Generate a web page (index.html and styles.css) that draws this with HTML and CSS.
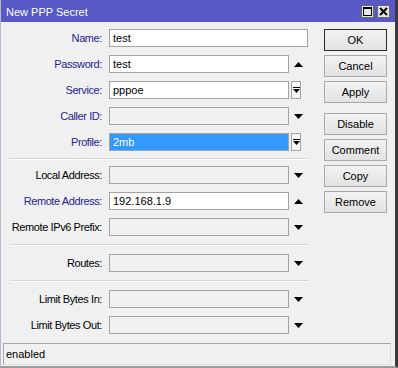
FILE: index.html
```html
<!DOCTYPE html>
<html lang="en">

<head>
	<meta charset="utf-8">
	<title>New PPP Secret</title>
	<link rel="stylesheet" href="styles.css">
</head>

<body>
	<div class="window">
		<header class="titlebar">
			<span class="title">New PPP Secret</span>
			<div class="title-btns">
				<span class="tbtn">
					<svg width="9" height="9" viewBox="0 0 9 9"><rect x="0.5" y="0.5" width="8" height="8" fill="none" stroke="#000" stroke-width="1"/><rect x="0" y="0" width="9" height="2" fill="#000"/></svg>
				</span>
				<span class="tbtn">
					<svg width="9" height="9" viewBox="0 0 9 9"><path d="M1 1 L8 8 M8 1 L1 8" stroke="#000" stroke-width="2"/></svg>
				</span>
			</div>
		</header>

		<main class="content">
			<section class="form">
				<div class="row">
					<label class="lbl blue">Name:</label>
					<div class="field wide">test</div>
				</div>
				<div class="row">
					<label class="lbl blue">Password:</label>
					<div class="field">test</div>
					<span class="arrow"><svg width="9" height="5" viewBox="0 0 9 5"><polygon points="4.5,0 9,5 0,5" fill="#000"/></svg></span>
				</div>
				<div class="row">
					<label class="lbl blue">Service:</label>
					<div class="field">pppoe</div>
					<span class="drop"><svg width="7" height="7" viewBox="0 0 7 7"><rect x="0" y="0" width="7" height="1" fill="#000"/><polygon points="0,2 7,2 3.5,6" fill="#000"/></svg></span>
				</div>
				<div class="row">
					<label class="lbl blue">Caller ID:</label>
					<div class="field empty"></div>
					<span class="arrow"><svg width="9" height="5" viewBox="0 0 9 5"><polygon points="0,0 9,0 4.5,5" fill="#000"/></svg></span>
				</div>
				<div class="row">
					<label class="lbl blue">Profile:</label>
					<div class="field selected">2mb</div>
					<span class="drop"><svg width="7" height="7" viewBox="0 0 7 7"><rect x="0" y="0" width="7" height="1" fill="#000"/><polygon points="0,2 7,2 3.5,6" fill="#000"/></svg></span>
				</div>

				<div class="sep first"></div>

				<div class="row">
					<label class="lbl">Local Address:</label>
					<div class="field empty"></div>
					<span class="arrow"><svg width="9" height="5" viewBox="0 0 9 5"><polygon points="0,0 9,0 4.5,5" fill="#000"/></svg></span>
				</div>
				<div class="row">
					<label class="lbl blue">Remote Address:</label>
					<div class="field">192.168.1.9</div>
					<span class="arrow"><svg width="9" height="5" viewBox="0 0 9 5"><polygon points="4.5,0 9,5 0,5" fill="#000"/></svg></span>
				</div>
				<div class="row">
					<label class="lbl">Remote IPv6 Prefix:</label>
					<div class="field empty"></div>
					<span class="arrow"><svg width="9" height="5" viewBox="0 0 9 5"><polygon points="0,0 9,0 4.5,5" fill="#000"/></svg></span>
				</div>

				<div class="sep"></div>

				<div class="row">
					<label class="lbl">Routes:</label>
					<div class="field empty"></div>
					<span class="arrow"><svg width="9" height="5" viewBox="0 0 9 5"><polygon points="0,0 9,0 4.5,5" fill="#000"/></svg></span>
				</div>

				<div class="sep"></div>

				<div class="row">
					<label class="lbl">Limit Bytes In:</label>
					<div class="field empty"></div>
					<span class="arrow"><svg width="9" height="5" viewBox="0 0 9 5"><polygon points="0,0 9,0 4.5,5" fill="#000"/></svg></span>
				</div>
				<div class="row">
					<label class="lbl">Limit Bytes Out:</label>
					<div class="field empty"></div>
					<span class="arrow"><svg width="9" height="5" viewBox="0 0 9 5"><polygon points="0,0 9,0 4.5,5" fill="#000"/></svg></span>
				</div>
			</section>

			<nav class="buttons">
				<button class="btn default">OK</button>
				<button class="btn">Cancel</button>
				<button class="btn">Apply</button>
				<button class="btn spaced">Disable</button>
				<button class="btn">Comment</button>
				<button class="btn">Copy</button>
				<button class="btn">Remove</button>
			</nav>
		</main>

		<footer class="status">enabled</footer>
	</div>
</body>

</html>
```

FILE: styles.css
```css
*,
body * {
	box-sizing: border-box;
}

body {
	margin: 0;
	padding: 0;
	background-color: #f0f0f0;
	font-family: "Liberation Sans", Arial, sans-serif;
	font-size: 11px;
	color: #000000;
}

.window {
	width: 398px;
	height: 368px;
	display: flex;
	flex-direction: column;
	background-color: #f0f0f0;
	border-left: 1px solid #b9b9c9;
	border-right: 3px solid #3a3a3a;
	border-bottom: 2px solid #9c9c9c;
}

.titlebar {
	height: 22px;
	display: flex;
	align-items: center;
	justify-content: space-between;
	padding: 1px 5px 0 5px;
	background-color: #5858c6;
	color: #ffffff;
}

.title {
	font-size: 11px;
}

.title-btns {
	display: flex;
	gap: 3px;
}

.tbtn {
	width: 13px;
	height: 13px;
	display: flex;
	align-items: center;
	justify-content: center;
	background-color: #e4e4e4;
	border: 1px solid #6a6a6a;
}

.content {
	display: flex;
	padding-top: 7px;
}

.form {
	width: 307px;
}

.row {
	height: 18px;
	display: flex;
	align-items: center;
	margin-bottom: 8px;
}

.lbl {
	width: 108px;
	padding-right: 7px;
	text-align: right;
	font-size: 11px;
	letter-spacing: -0.4px;
	white-space: nowrap;
}

.blue {
	color: #24248f;
}

.field {
	width: 180px;
	height: 18px;
	padding: 0 3px;
	line-height: 16px;
	background-color: #ffffff;
	border: 1px solid #a3a3a3;
	font-size: 11px;
}

.field.wide {
	width: 199px;
}

.field.empty {
	background-color: #f0f0f0;
}

.field.selected {
	background-color: #3399ff;
	color: #ffffff;
}

.arrow {
	width: 19px;
	display: flex;
	justify-content: center;
}

.drop {
	width: 10px;
	height: 18px;
	margin-left: 2px;
	display: flex;
	align-items: center;
	justify-content: center;
	background-color: #f7f7f7;
	border: 1px solid #a3a3a3;
}

.sep {
	width: 299px;
	height: 2px;
	margin: 0 0 8px 9px;
	border-top: 1px solid #d6d6d6;
	border-bottom: 1px solid #ffffff;
}

.sep.first {
	margin-top: -1px;
	margin-bottom: 6px;
}

.buttons {
	display: flex;
	flex-direction: column;
	gap: 4px;
	margin-left: 16px;
}

.btn {
	width: 63px;
	height: 22px;
	padding: 0;
	font-family: "Liberation Sans", Arial, sans-serif;
	font-size: 11px;
	color: #000000;
	background: linear-gradient(#f2f2f2, #e2e2e2);
	border: 1px solid #a9a9a9;
}

.btn.default {
	border-color: #2a2a2a;
}

.btn.spaced {
	margin-top: 6px;
}

.status {
	height: 22px;
	margin: auto 4px 1px 2px;
	padding-left: 2px;
	line-height: 20px;
	border: 1px solid #a8a8a8;
	border-right-color: #d8d8d8;
	border-bottom-color: #e0e0e0;
}
```
